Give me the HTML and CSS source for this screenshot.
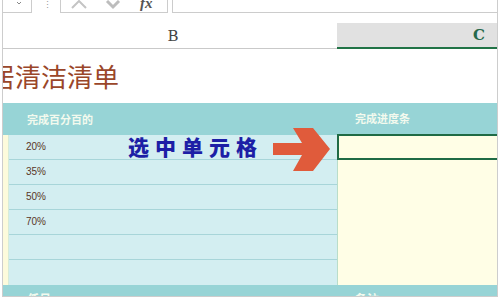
FILE: index.html
```html
<!DOCTYPE html>
<html lang="zh-CN">
<head>
  <meta charset="UTF-8" />
  <title>家居清洁清单</title>
  <link rel="stylesheet" href="styles.css">
</head>
<body>
  <div class="frame">
    <div class="fbar">
      <div class="namebox">
        <svg width="6" height="4" viewBox="0 0 6 4"><path d="M1 1 L3 3 L5 1" fill="none" stroke="#888" stroke-width="1"/></svg>
      </div>
      <div class="dots">⋮</div>
      <div class="btnbox">
        <svg class="ico up" width="18" height="10" viewBox="0 0 18 10"><path d="M2 9 L9 2 L16 9" fill="none" stroke="#c4c4c4" stroke-width="2"/></svg>
        <svg class="ico down" width="16" height="10" viewBox="0 0 16 10"><path d="M2 1 L8 7 L14 1" fill="none" stroke="#bdbdbd" stroke-width="3"/></svg>
        <span class="fx">fx</span>
      </div>
      <div class="formula"></div>
    </div>

    <div class="colhead">
      <div class="ch ch-b">B</div>
      <div class="ch ch-c">C</div>
    </div>

    <div class="title-row"><h1>居清洁清单</h1></div>

    <div class="thead">
      <div class="th">完成百分百的</div>
      <div class="th th-c">完成进度条</div>
    </div>

    <div class="row"><div class="strip"></div><div class="cell">20%</div><div class="cell-c selected"></div></div>
    <div class="row"><div class="strip"></div><div class="cell">35%</div><div class="cell-c"></div></div>
    <div class="row"><div class="strip"></div><div class="cell">50%</div><div class="cell-c"></div></div>
    <div class="row"><div class="strip"></div><div class="cell">70%</div><div class="cell-c"></div></div>
    <div class="row"><div class="strip"></div><div class="cell"></div><div class="cell-c"></div></div>
    <div class="row last"><div class="strip"></div><div class="cell"></div><div class="cell-c"></div></div>

    <div class="tfoot">
      <div class="th">任月</div>
      <div class="th th-c">备注</div>
    </div>

    <div class="callout">选中单元格</div>
    <svg class="arrow" width="60" height="46" viewBox="0 0 60 46">
      <polygon points="0,15 29,15 20,0 40,0 57,21 40,43 20,43 29,27 0,27" fill="#e05b3b"/>
    </svg>
  </div>
</body>
</html>
```

FILE: styles.css
```css
html, body {
  margin: 0;
  background: #fff;
}
body {
  width: 500px;
  height: 299px;
  overflow: hidden;
  font-family: "Noto Sans CJK SC", "Liberation Sans", sans-serif;
}
.frame {
  position: relative;
  margin-left: 2px;
  width: 494px;
  height: 296px;
  border-left: 1px solid #cdcdcd;
  border-right: 1px solid #cdcdcd;
  border-bottom: 1px solid #cdcdcd;
  overflow: hidden;
}

/* formula bar */
.fbar {
  display: flex;
  height: 13px;
}
.namebox {
  width: 29px;
  box-sizing: border-box;
  border-right: 1px solid #cccccc;
  border-bottom: 1px solid #cccccc;
  display: flex;
  justify-content: flex-end;
  padding-right: 9px;
}
.namebox svg {
  margin-top: 1px;
}
.dots {
  width: 28px;
  box-sizing: border-box;
  padding-left: 2px;
  text-align: center;
  font-size: 9px;
  line-height: 9px;
  color: #999;
}
.btnbox {
  width: 108px;
  box-sizing: border-box;
  border-left: 1px solid #cccccc;
  border-right: 1px solid #cccccc;
  border-bottom: 1px solid #cccccc;
  display: flex;
  align-items: flex-start;
  padding-left: 9px;
}
.ico.up {
  margin-top: -1px;
}
.ico.down {
  margin-left: 17px;
}
.fx {
  margin-left: 19px;
  margin-top: -4px;
  font-family: "Liberation Serif", serif;
  font-style: italic;
  font-weight: bold;
  font-size: 15px;
  line-height: 15px;
  color: #555;
}
.formula {
  flex: 1;
  margin-left: 4px;
  border-left: 1px solid #cccccc;
  border-bottom: 1px solid #cccccc;
}

/* column headers */
.colhead {
  display: flex;
  margin-top: 10px;
  height: 26px;
}
.ch {
  box-sizing: border-box;
  height: 26px;
  font-family: "DejaVu Serif", "Liberation Serif", serif;
  font-size: 15px;
  line-height: 26px;
}
.ch-b {
  width: 334px;
  border-bottom: 1px solid #c9c9c9;
  text-align: center;
  padding-left: 6px;
  color: #444;
}
.ch-c {
  flex: 1;
  background: #e1e1e1;
  border-bottom: 2px solid #217346;
  text-align: right;
  padding-right: 12px;
  color: #26684a;
  font-weight: bold;
  line-height: 24px;
}

/* sheet */
.title-row {
  height: 54px;
  box-sizing: border-box;
  padding-top: 14px;
}
.title-row h1 {
  margin: 0 0 0 -14px;
  font-size: 26px;
  line-height: 26px;
  font-weight: 400;
  color: #9a4629;
  white-space: nowrap;
}
.thead, .tfoot {
  display: grid;
  grid-template-columns: 334px 1fr;
  background: #97d4d6;
}
.thead {
  height: 32px;
}
.tfoot {
  height: 13px;
}
.th {
  padding-left: 24px;
  font-size: 11px;
  font-weight: bold;
  color: #f3faee;
  line-height: 32px;
  white-space: nowrap;
}
.th-c {
  padding-left: 18px;
  line-height: 30px;
}
.tfoot .th {
  line-height: 11px;
  padding-top: 8px;
  font-size: 12px;
}
.row {
  display: grid;
  grid-template-columns: 6px 328px 1fr;
  height: 25px;
}
.strip {
  background: #fdfbdc;
  border-right: 1px solid #d8ecd8;
}
.cell {
  background: #d3eef1;
  border-bottom: 1px solid #a7d5d9;
  padding-left: 17px;
  font-family: "Liberation Sans", sans-serif;
  font-size: 10px;
  line-height: 24px;
  color: #5a3626;
}
.row.last .cell {
  border-bottom: none;
}
.cell-c {
  background: #fffee6;
  border-left: 1px solid #b9ddc9;
}
.cell-c.selected {
  border: 2px solid #1f6b45;
  border-right: none;
  margin-top: -1px;
}

/* annotation overlay */
.callout {
  position: absolute;
  left: 125px;
  top: 134px;
  font-size: 21px;
  line-height: 24px;
  font-weight: 900;
  letter-spacing: 6px;
  color: #1d1fa6;
  white-space: nowrap;
}
.arrow {
  position: absolute;
  left: 270px;
  top: 128px;
}
```
